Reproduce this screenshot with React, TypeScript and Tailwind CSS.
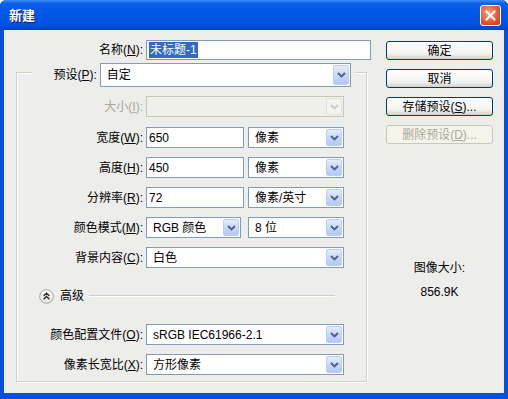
import React from "react"

// XP-style Photoshop "新建" dialog

function Chevron({ disabled }: { disabled?: boolean }) {
  return (
    <svg width="9" height="6" viewBox="0 0 9 6">
      <path d="M1 1 L4.5 4.5 L8 1" fill="none" stroke={disabled ? "#c7cad0" : "#4d6185"} strokeWidth="1.9" />
    </svg>
  )
}

function Combo({ value, className, disabled }: { value?: string; className: string; disabled?: boolean }) {
  return (
    <div
      className={
        "flex items-stretch border " +
        (disabled ? "border-[#c9c7ba] bg-[#efefeb] " : "border-[#7f9db9] bg-white ") +
        className
      }
    >
      <span className="flex flex-1 items-center pl-[6px] whitespace-nowrap">{value}</span>
      <span
        className={
          "m-px flex w-[16px] items-center justify-center rounded-[2px] border " +
          (disabled
            ? "border-[#e2e2dc] bg-[#f3f3ef]"
            : "border-[#b9cdf6] bg-[linear-gradient(to_bottom,#e3ecfe,#c3d5fb_60%,#b2c8f6)]")
        }
      >
        <Chevron disabled={disabled} />
      </span>
    </div>
  )
}

function Field({ value, className }: { value: React.ReactNode; className: string }) {
  return (
    <div className={"flex items-center border border-[#7f9db9] bg-white pl-[2px] " + className}>{value}</div>
  )
}

function Row({ label, children, className = "", disabled }: { label: React.ReactNode; children: React.ReactNode; className?: string; disabled?: boolean }) {
  return (
    <div className={"flex items-center " + className}>
      <div className={"w-[126px] text-right whitespace-nowrap " + (disabled ? "text-[#aca899]" : "")}>{label}</div>
      <div className="ml-[3px] flex gap-[4px]">{children}</div>
    </div>
  )
}

function Button({ children, disabled }: { children: React.ReactNode; disabled?: boolean }) {
  return (
    <div
      className={
        "flex h-[19px] w-[107px] items-center justify-center rounded-[3px] border " +
        (disabled
          ? "border-[#c9c7ba] bg-[#f5f4ea] text-[#aca899]"
          : "border-[#003c74] bg-[linear-gradient(to_bottom,#ffffff,#f3f3ef_70%,#d6d0c5)] text-black")
      }
    >
      {children}
    </div>
  )
}

export default function App() {
  return (
    <div className="flex h-[399px] w-[508px] flex-col overflow-hidden rounded-t-[6px] bg-[#0a4fdc] font-['Liberation_Sans','Noto_Sans_CJK_SC',sans-serif] text-[12px] leading-none text-black">
      {/* title bar */}
      <div className="flex h-[30px] shrink-0 items-center justify-between bg-[linear-gradient(to_bottom,#3d8ef8,#0b5fea_12%,#0058e6_45%,#0052e0_80%,#0043cc)] pl-[9px] pr-[7px]">
        <span className="text-[13px] font-bold text-white [text-shadow:1px_1px_0_#0a1e6e]">新建</span>
        <div className="flex h-[21px] w-[21px] items-center justify-center rounded-[3px] border border-white bg-[radial-gradient(circle_at_40%_35%,#f0a48a,#e2542f_60%,#c63a18)]">
          <svg width="11" height="11" viewBox="0 0 11 11">
            <path d="M1.5 1.5 L9.5 9.5 M9.5 1.5 L1.5 9.5" stroke="#fff" strokeWidth="2.2" strokeLinecap="round" />
          </svg>
        </div>
      </div>

      {/* body */}
      <div className="mx-[4px] mb-[6px] flex flex-1 bg-[#ededeb]">
        {/* left column */}
        <div className="flex w-[367px] flex-col pt-[10px]">
          <div className="flex items-center">
            <div className="w-[139px] text-right">
              名称(<u>N</u>):
            </div>
            <Field
              className="ml-[3px] h-[20px] w-[225px]"
              value={<span className="bg-[#316ac5] px-px py-[2px] text-white">未标题-1</span>}
            />
          </div>

          {/* group box */}
          <div className="ml-[12px] mt-[12px] flex w-[351px] flex-col border border-[#d0d0bf] pb-[6px] shadow-[inset_1px_1px_0_#ffffff,1px_1px_0_#ffffff]">
            <div className="ml-[15px] mt-[-10px] flex w-[323px] items-center bg-[#ededeb] pr-[4px]">
              <div className="w-[65px] text-right">
                预设(<u>P</u>):
              </div>
              <Combo className="ml-[3px] h-[24px] w-[252px]" value="自定" />
            </div>

            <Row className="mt-[9px]" disabled label={<>大小(<u>I</u>):</>}>
              <Combo className="h-[21px] w-[198px]" disabled />
            </Row>
            <Row className="mt-[10px]" label={<>宽度(<u>W</u>):</>}>
              <Field className="h-[21px] w-[98px]" value="650" />
              <Combo className="h-[21px] w-[96px]" value="像素" />
            </Row>
            <Row className="mt-[9px]" label={<>高度(<u>H</u>):</>}>
              <Field className="h-[21px] w-[98px]" value="450" />
              <Combo className="h-[21px] w-[96px]" value="像素" />
            </Row>
            <Row className="mt-[9px]" label={<>分辨率(<u>R</u>):</>}>
              <Field className="h-[21px] w-[98px]" value="72" />
              <Combo className="h-[21px] w-[96px]" value="像素/英寸" />
            </Row>
            <Row className="mt-[9px]" label={<>颜色模式(<u>M</u>):</>}>
              <Combo className="h-[21px] w-[95px]" value="RGB 颜色" />
              <Combo className="ml-[3px] h-[21px] w-[96px]" value="8 位" />
            </Row>
            <Row className="mt-[9px]" label={<>背景内容(<u>C</u>):</>}>
              <Combo className="h-[21px] w-[198px]" value="白色" />
            </Row>

            {/* advanced */}
            <div className="ml-[22px] mr-[31px] mt-[20px] flex h-[16px] items-center">
              <svg width="15" height="15" viewBox="0 0 15 15">
                <defs>
                  <linearGradient id="adv" x1="0" y1="0" x2="0" y2="1">
                    <stop offset="0" stopColor="#ffffff" />
                    <stop offset="1" stopColor="#e4e3dc" />
                  </linearGradient>
                </defs>
                <circle cx="7.5" cy="7.5" r="6.8" fill="url(#adv)" stroke="#a7a69c" />
                <path d="M4.6 7 L7.5 4.3 L10.4 7 M4.6 10.2 L7.5 7.5 L10.4 10.2" fill="none" stroke="#2c2c2c" strokeWidth="1.4" />
              </svg>
              <span className="ml-[6px]">高级</span>
              <div className="ml-[5px] h-[2px] flex-1 border-t border-b border-t-[#d0d0bf] border-b-white" />
            </div>

            <Row className="mt-[20px]" label={<>颜色配置文件(<u>O</u>):</>}>
              <Combo className="h-[21px] w-[198px]" value="sRGB IEC61966-2.1" />
            </Row>
            <Row className="mt-[9px]" label={<>像素长宽比(<u>X</u>):</>}>
              <Combo className="h-[21px] w-[198px]" value="方形像素" />
            </Row>
          </div>
        </div>

        {/* right column */}
        <div className="ml-[15px] flex w-[107px] flex-col gap-[9px] pt-[11px]">
          <Button>确定</Button>
          <Button>取消</Button>
          <Button>
            存储预设(<u>S</u>)...
          </Button>
          <Button disabled>
            删除预设(<u>D</u>)...
          </Button>
          <div className="mt-[107px] flex flex-col items-center gap-[8px] leading-[16px]">
            <span>图像大小:</span>
            <span>856.9K</span>
          </div>
        </div>
      </div>
    </div>
  )
}
